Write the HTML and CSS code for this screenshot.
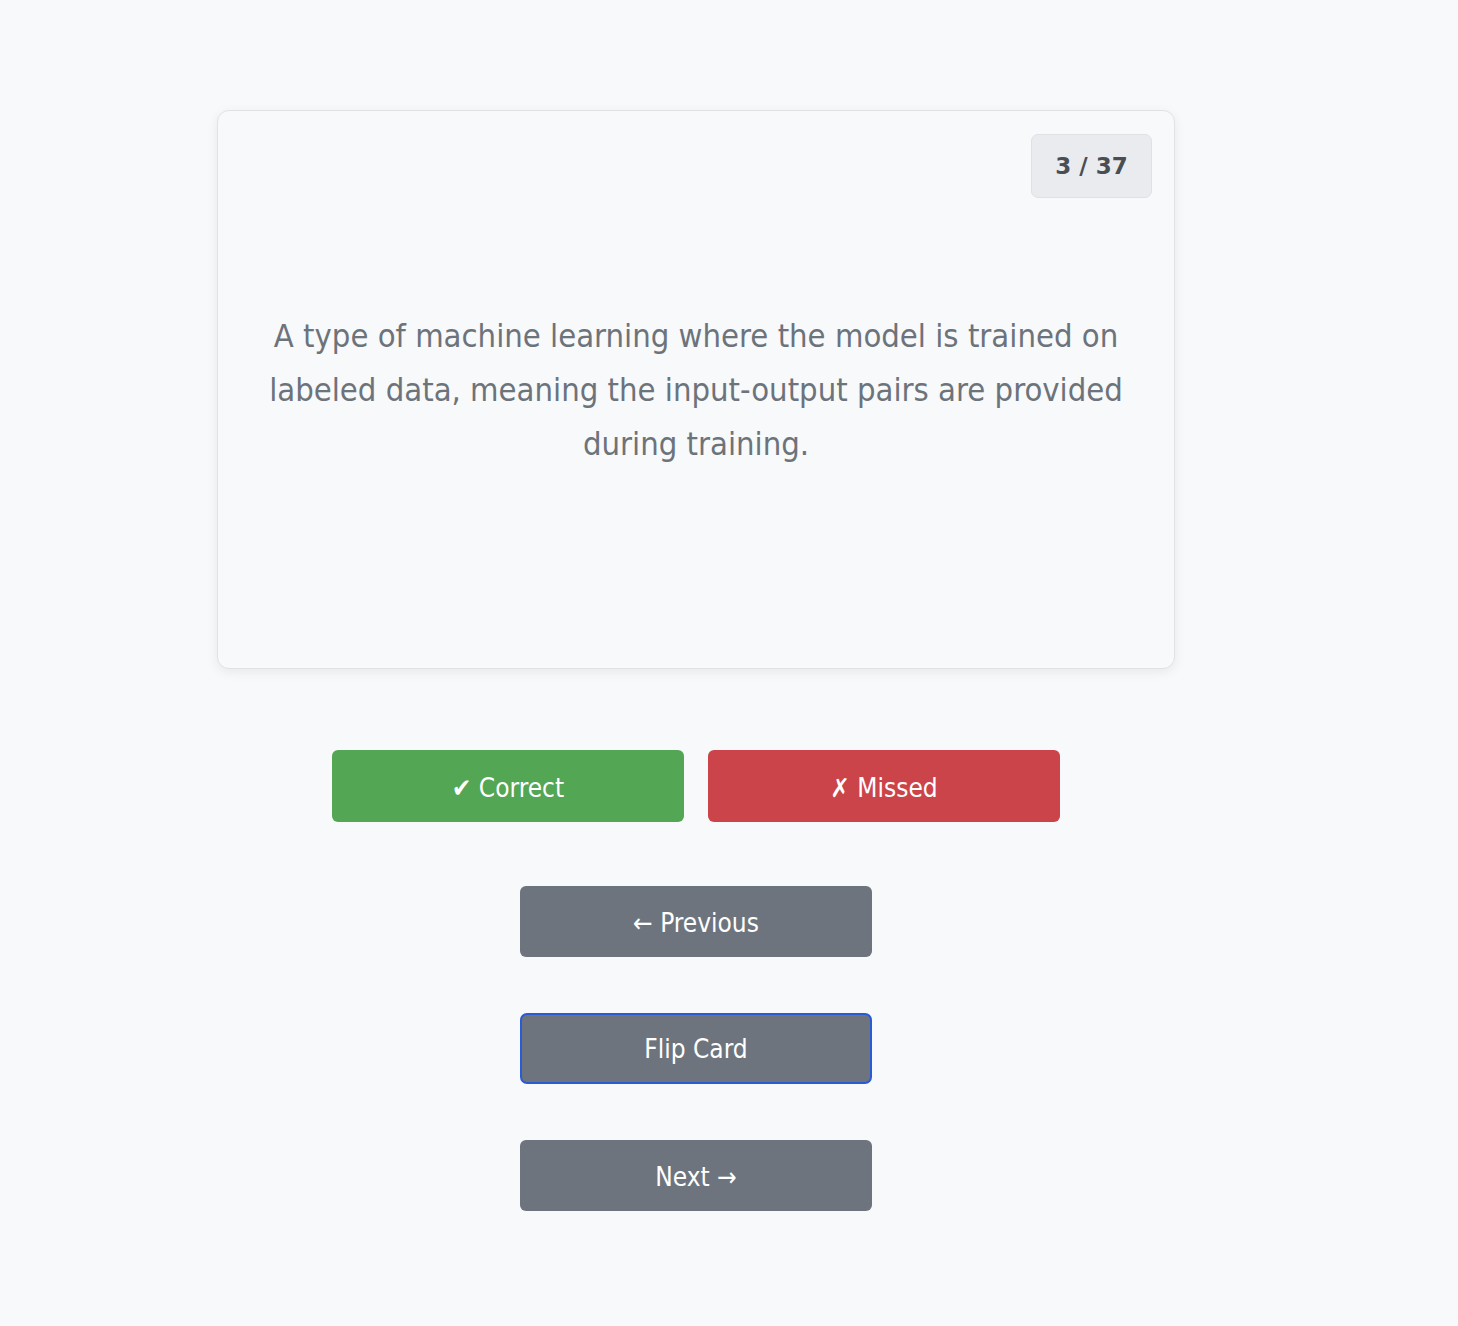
FILE: index.html
```html
<!DOCTYPE html>
<html lang="en">
<head>
<meta charset="utf-8">
<title>Flashcards</title>
<link rel="stylesheet" href="styles.css">
</head>
<body>
<main class="study">
  <section class="card">
    <div class="counter">3 / 37</div>
    <p class="card-text">A type of machine learning where the model is trained on labeled data, meaning the input-output pairs are provided during training.</p>
  </section>
  <div class="grade-row">
    <button class="btn btn-correct">✔ Correct</button>
    <button class="btn btn-missed">✗ Missed</button>
  </div>
  <div class="nav">
    <button class="btn btn-nav btn-prev">← Previous</button>
    <button class="btn btn-nav btn-flip">Flip Card</button>
    <button class="btn btn-nav btn-next">Next →</button>
  </div>
</main>
</body>
</html>
```
FILE: styles.css
```css
html, body {
  margin: 0;
  padding: 0;
  background: #f8f9fa;
}
body {
  font-family: "DejaVu Sans Condensed", "DejaVu Sans", sans-serif;
  color: #6c757d;
  min-height: 1326px;
}
.study {
  width: 958px;
  margin-left: 217px;
  padding-top: 110px;
  display: flex;
  flex-direction: column;
  align-items: center;
}
.card {
  position: relative;
  box-sizing: border-box;
  width: 958px;
  height: 559px;
  background: #f8f9fa;
  border: 1px solid #e0e2e5;
  border-radius: 12px;
  box-shadow: 0 3px 12px rgba(0, 0, 0, 0.07);
  display: flex;
  align-items: center;
  justify-content: center;
  padding: 0 40px;
}
.counter {
  position: absolute;
  top: 23px;
  right: 22px;
  width: 121px;
  height: 64px;
  box-sizing: border-box;
  border: 1px solid #dfe1e4;
  border-radius: 7px;
  background: #eaebee;
  color: #494e55;
  font-family: "DejaVu Sans", sans-serif;
  font-weight: bold;
  font-size: 23px;
  display: flex;
  align-items: center;
  justify-content: center;
}
.card-text {
  margin: 0;
  text-align: center;
  font-size: 32.5px;
  line-height: 54px;
  color: #6c737b;
}
.grade-row {
  display: flex;
  gap: 24px;
  margin-top: 81px;
}
.btn {
  box-sizing: border-box;
  width: 352px;
  height: 72px;
  border: 0;
  border-radius: 6px;
  color: #ffffff;
  font-family: "DejaVu Sans Condensed", "DejaVu Sans", sans-serif;
  font-size: 26px;
  display: flex;
  align-items: center;
  justify-content: center;
  padding: 3px 0 0;
}
.btn-correct { background: #53a653; }
.btn-missed { background: #cb444a; }
.nav {
  display: flex;
  flex-direction: column;
  align-items: center;
  gap: 56px;
  margin-top: 64px;
}
.btn-nav {
  background: #6d747d;
  height: 71px;
}
.btn-flip {
  border: 2px solid #2a5bd7;
  border-radius: 7px;
  padding-top: 1px;
}
```
